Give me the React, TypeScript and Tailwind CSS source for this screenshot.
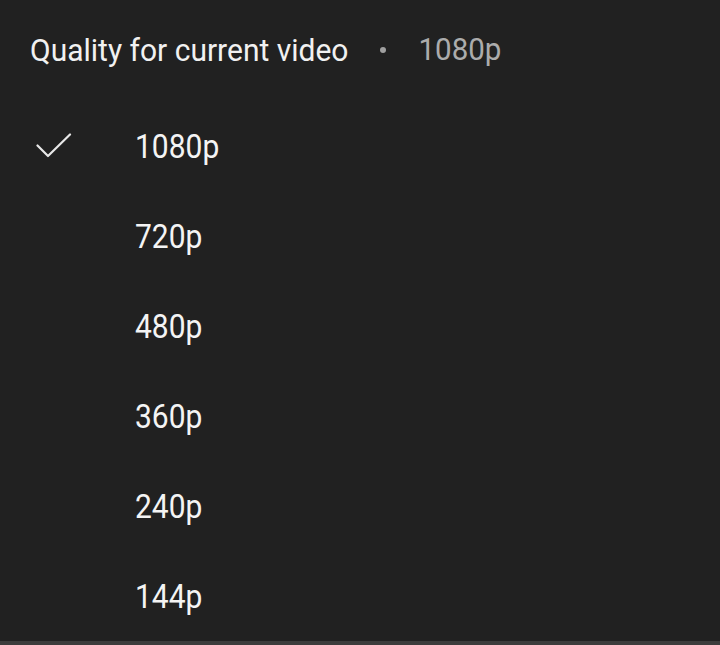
export default function App() {
  const qualities = ["1080p", "720p", "480p", "360p", "240p", "144p"];
  const selected = "1080p";

  return (
    <div
      className="h-[645px] w-full bg-[#212121] flex flex-col text-white overflow-hidden"
      style={{ fontFamily: "Roboto, 'Noto Sans', sans-serif" }}
    >
      {/* Header */}
      <div className="h-[103px] flex items-center pl-[30px] pb-[2px]">
        <span className="inline-block scale-y-[1.06] text-[30px] text-[#f1f1f1]">Quality for current video</span>
        <span className="ml-[32px] w-[6px] h-[6px] rounded-full bg-[#a0a0a0]" />
        <span className="inline-block scale-y-[1.06] ml-[32px] text-[29.5px] text-[#acacac]">1080p</span>
      </div>

      {/* Options */}
      <div className="flex-1 flex flex-col">
        {qualities.map((q) => (
          <div key={q} className="h-[90px] flex items-center">
            <div className="w-[135px] pl-[36px] flex items-center">
              {q === selected && (
                <svg width="36" height="26" viewBox="0 0 36 26" fill="none">
                  <path
                    d="M1.5 12.5 L12 23 L34 1.5"
                    stroke="#e8e8e8"
                    strokeWidth="2.2"
                    strokeLinecap="round"
                    strokeLinejoin="round"
                  />
                </svg>
              )}
            </div>
            <span className="inline-block scale-y-[1.08] text-[30px] text-[#f4f4f4]">{q}</span>
          </div>
        ))}
      </div>

      <div className="h-[4px] bg-[#3c3c3c]" />
    </div>
  );
}
